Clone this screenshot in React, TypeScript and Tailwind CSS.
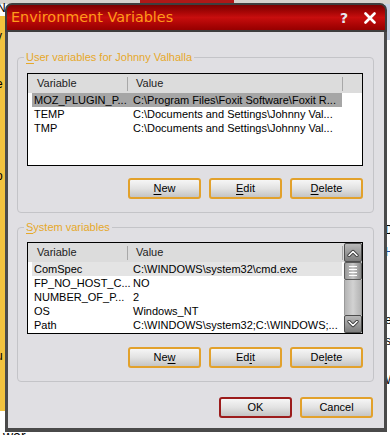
import React from 'react';

const userRows: [string, string][] = [
  ['MOZ_PLUGIN_P...', 'C:\\Program Files\\Foxit Software\\Foxit R...'],
  ['TEMP', 'C:\\Documents and Settings\\Johnny Val...'],
  ['TMP', 'C:\\Documents and Settings\\Johnny Val...'],
];

const systemRows: [string, string][] = [
  ['ComSpec', 'C:\\WINDOWS\\system32\\cmd.exe'],
  ['FP_NO_HOST_C...', 'NO'],
  ['NUMBER_OF_P...', '2'],
  ['OS', 'Windows_NT'],
  ['Path', 'C:\\WINDOWS\\system32;C:\\WINDOWS;...'],
];

function Btn({ children, ok }: { children: React.ReactNode; ok?: boolean }) {
  return (
    <button
      className={
        'w-[73px] h-[21px] rounded-[3px] border-2 text-[11px] leading-none text-black bg-gradient-to-b from-[#f6f6f6] via-[#e2e2e2] to-[#c4c4c4] ' +
        (ok ? 'border-[#9c1c1c]' : 'border-[#e2a12c]')
      }
    >
      {children}
    </button>
  );
}

function U({ children }: { children: React.ReactNode }) {
  return <span className="underline underline-offset-[2px] decoration-1">{children}</span>;
}

function Header() {
  return (
    <div className="flex h-[19px] items-center bg-[#dcdcdc] text-[11px] text-[#222]">
      <div className="w-[99px] pl-[9px]">Variable</div>
      <div className="w-px h-[14px] bg-[#a8a8a8]" />
      <div className="w-[214px] pl-[8px]">Value</div>
      <div className="w-px h-[14px] bg-[#a8a8a8]" />
    </div>
  );
}

function Rows({ rows, selBg }: { rows: [string, string][]; selBg: string }) {
  return (
    <div className="pl-[4px]">
      {rows.map(([k, v], i) => (
        <div
          key={k}
          className={'flex w-[310px] h-[14px] items-center text-[11px] text-black ' + (i === 0 ? selBg : '')}
        >
          <div className="w-[101px] pl-[2px] whitespace-nowrap">{k}</div>
          <div className="whitespace-nowrap">{v}</div>
        </div>
      ))}
    </div>
  );
}

function Chevron({ up }: { up?: boolean }) {
  const d = up ? 'M2 6.5 L6 2.5 L10 6.5' : 'M2 1.5 L6 5.5 L10 1.5';
  return (
    <svg width="12" height="8" viewBox="0 0 12 8">
      <path d={d} fill="none" stroke="#3a3a3a" strokeWidth="3.2" strokeLinecap="round" strokeLinejoin="round" />
      <path d={d} fill="none" stroke="#ffffff" strokeWidth="1.6" strokeLinecap="round" strokeLinejoin="round" />
    </svg>
  );
}

function ScrollBar() {
  return (
    <div className="w-[18px] flex flex-col bg-[#c9c9c9]">
      <div className="h-[19px] flex items-center justify-center rounded-[2px] border border-[#4d4d4d] bg-gradient-to-b from-[#b9b9b9] to-[#7d7d7d]">
        <Chevron up />
      </div>
      <div className="h-[18px] flex flex-col items-center justify-center gap-[2px] rounded-[2px] border border-[#5a5a5a] bg-gradient-to-r from-[#9a9a9a] via-[#c8c8c8] to-[#8a8a8a]">
        <div className="w-[8px] h-px bg-white" />
        <div className="w-[8px] h-px bg-white" />
        <div className="w-[8px] h-px bg-white" />
        <div className="w-[8px] h-px bg-white" />
      </div>
      <div className="flex-1 border-x border-[#9a9a9a] bg-gradient-to-r from-[#b4b4b4] via-[#d2d2d2] to-[#b4b4b4]" />
      <div className="h-[18px] flex items-center justify-center rounded-[2px] border border-[#4d4d4d] bg-gradient-to-b from-[#b9b9b9] to-[#7d7d7d]">
        <Chevron />
      </div>
    </div>
  );
}

function GroupBox({ label, children }: { label: React.ReactNode; children: React.ReactNode }) {
  return (
    <div className="relative rounded-[4px] border border-[#c4c4c8]">
      <span className="absolute left-[6px] top-[-8px] px-[2px] bg-[#e0dfe3] text-[11px] leading-[14px] text-[#e6a82a]">
        {label}
      </span>
      {children}
    </div>
  );
}

export default function App() {
  return (
    <div className="relative w-[390px] h-[435px] overflow-hidden bg-white font-['Liberation_Sans',Arial,sans-serif]">
      {/* desktop behind the dialog */}
      <div className="absolute left-0 top-0 w-[390px] h-[4px] bg-[#d6d3ce]" />
      <div className="absolute left-[140px] top-0 w-[94px] h-[3px] bg-[#b01818]" />
      <div className="absolute left-[385px] top-[4px] w-[5px] h-[36px] bg-[#c6d2e4]" />
      <div className="absolute left-0 top-[16px] w-[6px] h-[395px] bg-[#f2c23e]" />
      <div className="absolute left-[-3px] top-[2px] text-[12px] leading-none text-black">N</div>
      <div className="absolute left-[-4px] top-[30px] text-[12px] leading-none text-black">y</div>
      <div className="absolute left-[-4px] top-[78px] text-[12px] leading-none text-black">e</div>
      <div className="absolute left-[-4px] top-[170px] text-[12px] leading-none text-black">o</div>
      <div className="absolute left-[-4px] top-[268px] text-[12px] leading-none text-black">t</div>
      <div className="absolute left-[-4px] top-[350px] text-[12px] leading-none text-black">u</div>
      <div className="absolute left-[385px] top-[224px] text-[12px] leading-none text-black">D</div>
      <div className="absolute left-[385px] top-[246px] text-[12px] leading-none text-[#1f4fa8]">H</div>
      <div className="absolute left-[385px] top-[314px] text-[12px] leading-none text-black">e</div>
      <div className="absolute left-[385px] top-[335px] text-[12px] leading-none text-black">s</div>
      <div className="absolute left-[385px] top-[374px] text-[12px] leading-none text-black">W</div>
      <div className="absolute left-[3px] top-[429px] text-[14px] leading-none text-black">wer</div>

      {/* dialog window */}
      <div className="absolute left-[5px] top-[3px] w-[382px] h-[429px] flex flex-col">
        <div className="h-[29px] flex items-center rounded-t-[7px] border-2 border-[#3e3e3e] bg-gradient-to-b from-[#7c0000] via-[#c80e0e] to-[#960000] pl-[4px] pr-[6px]">
          <span className="flex-1 font-['DejaVu_Sans',sans-serif] text-[14.4px] leading-none text-[#ff9a1a]">
            Environment Variables
          </span>
          <span className="mr-[16px] font-['DejaVu_Sans',sans-serif] font-bold text-[14px] leading-none text-[#e8e8f0]">?</span>
          <svg width="12" height="12" viewBox="0 0 12 12" className="mr-[3px]">
            <path d="M1.5 1.5 L10.5 10.5 M10.5 1.5 L1.5 10.5" stroke="#ffffff" strokeWidth="2.6" strokeLinecap="round" />
          </svg>
        </div>

        <div className="flex-1 border-x-[3px] border-b-[4px] border-[#4a4a4a] bg-[#e0dfe3] pl-[9px] pr-[10px] pt-[25px] text-[11px]">
          <GroupBox
            label={
              <>
                <U>U</U>ser variables for Johnny Valhalla
              </>
            }
          >
            <div className="pt-[15px] pl-[9px] pr-[10px] pb-[13px]">
              <div className="h-[93px] border border-black bg-white">
                <Header />
                <Rows rows={userRows} selBg="bg-[#a6a6a6]" />
              </div>
              <div className="mt-[12px] flex justify-end gap-[8px]">
                <Btn>
                  <U>N</U>ew
                </Btn>
                <Btn>
                  <U>E</U>dit
                </Btn>
                <Btn>
                  <U>D</U>elete
                </Btn>
              </div>
            </div>
          </GroupBox>

          <div className="mt-[14px]">
            <GroupBox
              label={
                <>
                  <U>S</U>ystem variables
                </>
              }
            >
              <div className="pt-[14px] pl-[9px] pr-[10px] pb-[13px]">
                <div className="h-[92px] flex border border-black bg-white">
                  <div className="flex-1">
                    <Header />
                    <Rows rows={systemRows} selBg="bg-[#e4e4e4]" />
                  </div>
                  <ScrollBar />
                </div>
                <div className="mt-[13px] flex justify-end gap-[8px]">
                  <Btn>
                    Ne<U>w</U>
                  </Btn>
                  <Btn>
                    Ed<U>i</U>t
                  </Btn>
                  <Btn>
                    De<U>l</U>ete
                  </Btn>
                </div>
              </div>
            </GroupBox>
          </div>

          <div className="mt-[15px] flex justify-end gap-[8px] pr-[1px]">
            <Btn ok>OK</Btn>
            <Btn>Cancel</Btn>
          </div>
        </div>
      </div>
    </div>
  );
}
